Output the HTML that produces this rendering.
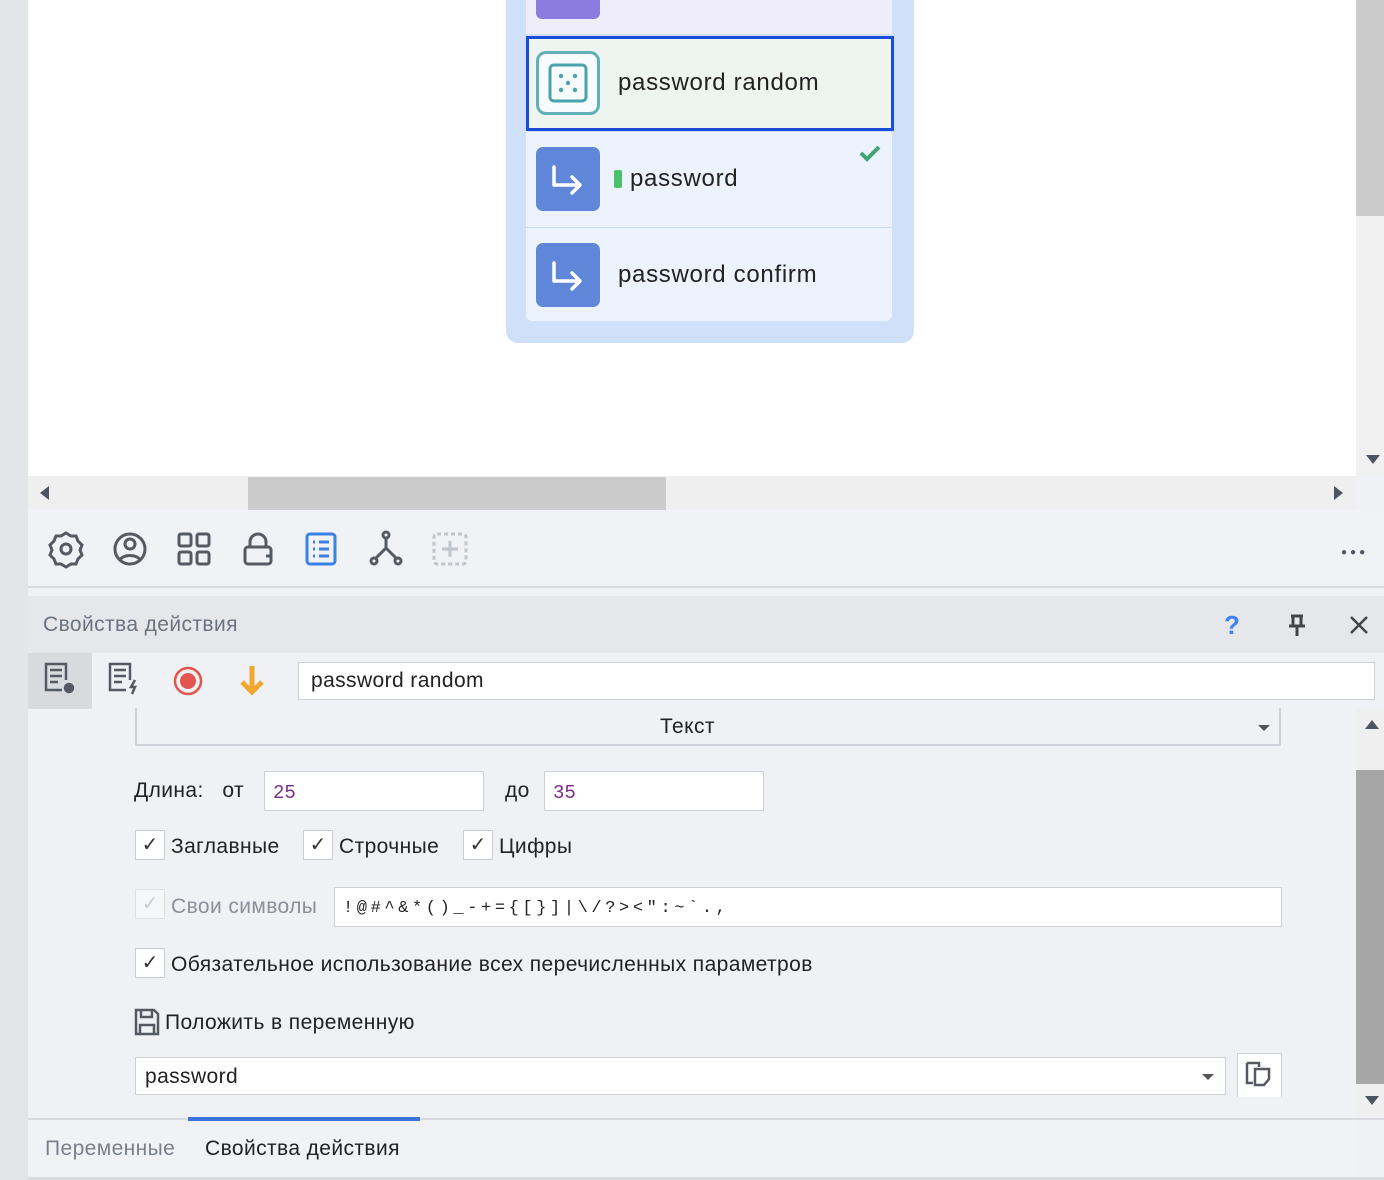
<!DOCTYPE html>
<html><head><meta charset="utf-8"><style>
*{margin:0;padding:0;box-sizing:border-box}
body{width:1384px;height:1180px;position:relative;overflow:hidden;background:#f0f1f5;font-family:"Liberation Sans","DejaVu Sans",sans-serif;color:#222}
.a{position:absolute}
.t{font-size:21px;white-space:nowrap;letter-spacing:0.4px}
.cb{position:absolute;width:30px;height:30px;border:1px solid #c9ccd3;background:#fff;font-size:20px;text-align:center;line-height:28px;color:#333}
.inp{position:absolute;background:#fff;border:1px solid #cdd0d6}
</style></head><body>
<div class="a" style="left:0;top:0;width:28px;height:1180px;background:#e3e5e9"></div>
<div class="a" style="left:28px;top:0;width:1328px;height:476px;background:#fff"></div>
<div class="a" style="left:1356px;top:0;width:28px;height:476px;background:#f0f0f0"></div>
<div class="a" style="left:1356px;top:0;width:28px;height:216px;background:#cbcbcb"></div>
<div class="a" style="left:1366px;top:455px;width:0;height:0;border-left:7px solid transparent;border-right:7px solid transparent;border-top:9px solid #4b5563"></div>
<div class="a" style="left:28px;top:476px;width:1328px;height:34px;background:#efefef"></div>
<div class="a" style="left:248px;top:477px;width:418px;height:33px;background:#cbcbcb"></div>
<div class="a" style="left:40px;top:486px;border-top:7px solid transparent;border-bottom:7px solid transparent;border-right:9px solid #4b5563"></div>
<div class="a" style="left:1334px;top:486px;border-top:7px solid transparent;border-bottom:7px solid transparent;border-left:9px solid #4b5563"></div>
<div class="a" style="left:506px;top:-20px;width:408px;height:363px;background:#cfe0f8;border-radius:12px"></div>
<div class="a" style="left:526px;top:-10px;width:366px;height:44px;background:#efedf9"></div>
<div class="a" style="left:536px;top:-12px;width:64px;height:31px;background:#8c7ce0;border-radius:6px"></div>
<div class="a" style="left:526px;top:36px;width:368px;height:95px;background:#eef5ef;border:3px solid #1a4dd8"></div>
<div class="a" style="left:536px;top:51px;width:64px;height:64px;border:3px solid #5fb0b8;border-radius:10px;background:#f7fbfb"></div>
<svg class="a" style="left:548px;top:63px" width="40" height="40" viewBox="0 0 40 40"><rect x="2" y="2" width="36" height="36" rx="4" fill="none" stroke="#4aa4ae" stroke-width="3"/><g fill="#4aa4ae"><circle cx="13" cy="13" r="2.2"/><circle cx="27" cy="13" r="2.2"/><circle cx="20" cy="20" r="2.2"/><circle cx="13" cy="27" r="2.2"/><circle cx="27" cy="27" r="2.2"/></g></svg>
<div class="a t" style="left:618px;top:69px;font-size:24px;letter-spacing:0.7px;color:#222">password random</div>
<div class="a" style="left:526px;top:132px;width:366px;height:95px;background:#ecf3fd"></div>
<div class="a" style="left:526px;top:228px;width:366px;height:93px;background:#ecf3fd;border-radius:0 0 6px 6px"></div>
<div class="a" style="left:526px;top:227px;width:366px;height:1px;background:#c9dcf5"></div>
<div class="a" style="left:536px;top:147px;width:64px;height:64px;background:#5f86d9;border-radius:7px"></div>
<div class="a" style="left:536px;top:243px;width:64px;height:64px;background:#5f86d9;border-radius:7px"></div>
<svg class="a" style="left:536px;top:147px" width="64" height="64"><path d="M18 20v18h26M36 30l8 8-8 8" fill="none" stroke="#fff" stroke-width="3.5" stroke-linecap="round" stroke-linejoin="round"/></svg>
<svg class="a" style="left:536px;top:243px" width="64" height="64"><path d="M18 20v18h26M36 30l8 8-8 8" fill="none" stroke="#fff" stroke-width="3.5" stroke-linecap="round" stroke-linejoin="round"/></svg>
<div class="a" style="left:614px;top:170px;width:8px;height:18px;background:#4cc06a;border-radius:2px"></div>
<div class="a t" style="left:630px;top:165px;font-size:24px;letter-spacing:0.7px">password</div>
<svg class="a" style="left:859px;top:144px" width="22" height="18"><path d="M2 9l6 6L20 3" fill="none" stroke="#3fa673" stroke-width="4"/></svg>
<div class="a t" style="left:618px;top:261px;font-size:24px;letter-spacing:0.7px">password confirm</div>
<div class="a" style="left:28px;top:510px;width:1356px;height:78px;background:#f1f2f6;border-bottom:2px solid #d8dade"></div>
<svg class="a" style="left:48px;top:530px" width="440" height="40" fill="none" stroke="#555a62" stroke-width="3">
<path d="M18 3l5 3h5l2 5 4 4-2 5 2 5-4 4-2 5h-5l-5 3-5-3h-5l-2-5-4-4 2-5-2-5 4-4 2-5h5z"/><circle cx="18" cy="19" r="5"/>
<circle cx="82" cy="19" r="15"/><circle cx="82" cy="14" r="5"/><path d="M72 30c3-6 17-6 20 0"/>
<rect x="131" y="4" width="12" height="12" rx="2"/><rect x="149" y="4" width="12" height="12" rx="2"/><rect x="131" y="22" width="12" height="12" rx="2"/><rect x="149" y="22" width="12" height="12" rx="2"/>
<path d="M202 17v-5a8 8 0 0 1 16 0v5"/><rect x="197" y="17" width="26" height="17" rx="3"/><path d="M218 26h5"/>
<rect x="259" y="4" width="28" height="30" rx="3" stroke="#3a82e8"/><path d="M265 12h2M271 12h10M265 19h2M271 19h10M265 26h2M271 26h10" stroke="#3a82e8"/>
<circle cx="338" cy="5" r="3"/><circle cx="326" cy="31" r="3"/><circle cx="350" cy="31" r="3"/><path d="M338 8v10M338 18l-11 11M338 18l11 11"/>
<rect x="386" y="4" width="32" height="30" rx="3" stroke="#c0c4cb" stroke-dasharray="4 3"/><path d="M402 11v16M394 19h16" stroke="#c0c4cb"/>
</svg>
<div class="a" style="left:1341px;top:547px;font-size:10px;letter-spacing:3px;color:#4b5563">●●●</div>
<div class="a" style="left:28px;top:596px;width:1356px;height:57px;background:#e6e7eb"></div>
<div class="a t" style="left:43px;top:613px;color:#6b7280">Свойства действия</div>
<div class="a" style="left:1224px;top:610px;font-size:26px;color:#3b82f6;font-weight:bold">?</div>
<svg class="a" style="left:1287px;top:614px" width="20" height="24"><path d="M4 2h12M6 2v10h8V2M2 12h16M10 12v10" fill="none" stroke="#444" stroke-width="3"/></svg>
<svg class="a" style="left:1349px;top:615px" width="20" height="20"><path d="M2 2l16 16M18 2L2 18" stroke="#444" stroke-width="2.5"/></svg>
<div class="a" style="left:28px;top:653px;width:64px;height:56px;background:#d8dade"></div>
<svg class="a" style="left:40px;top:660px" width="260" height="42" fill="none" stroke="#555a62" stroke-width="2.5">
<path d="M22 30H6V4h20v16"/><path d="M10 10h12M10 16h12M10 22h8"/><circle cx="29" cy="28" r="4" fill="#555a62"/>
<path d="M86 30H70V4h20v16"/><path d="M74 10h12M74 16h12M74 22h8"/><path d="M95 20l-4 7h4l-3 7" stroke-width="2.5"/>
<circle cx="148" cy="21" r="13" stroke="#e3564d"/><circle cx="148" cy="21" r="8" fill="#e3564d" stroke="none"/>
<path d="M212 6v26M202 22l10 10 10-10" stroke="#f0a830" stroke-width="5"/>
</svg>
<div class="inp" style="left:298px;top:662px;width:1077px;height:38px"></div>
<div class="a t" style="left:311px;top:669px">password random</div>
<div class="a" style="left:135px;top:708px;width:1146px;height:38px;border-left:2px solid #cdd0d6;border-right:2px solid #cdd0d6;border-bottom:2px solid #cdd0d6"></div>
<div class="a t" style="left:660px;top:715px">Текст</div>
<div class="a" style="left:1258px;top:725px;border-left:6px solid transparent;border-right:6px solid transparent;border-top:6px solid #555"></div>
<div class="a" style="left:1356px;top:708px;width:28px;height:412px;background:#efefef"></div>
<div class="a" style="left:1356px;top:770px;width:28px;height:314px;background:#a6a6a6"></div>
<div class="a" style="left:1365px;top:720px;border-left:7px solid transparent;border-right:7px solid transparent;border-bottom:9px solid #4b5563"></div>
<div class="a" style="left:1365px;top:1096px;border-left:7px solid transparent;border-right:7px solid transparent;border-top:9px solid #4b5563"></div>
<div class="a t" style="left:134px;top:779px">Длина:&nbsp;&nbsp; от</div>
<div class="inp" style="left:264px;top:771px;width:220px;height:40px"></div>
<div class="a" style="left:273px;top:782px;font-family:'Liberation Mono',monospace;font-size:19px;color:#7a2a8a">25</div>
<div class="a t" style="left:505px;top:779px">до</div>
<div class="inp" style="left:544px;top:771px;width:220px;height:40px"></div>
<div class="a" style="left:553px;top:782px;font-family:'Liberation Mono',monospace;font-size:19px;color:#7a2a8a">35</div>
<div class="cb" style="left:135px;top:830px">✓</div><div class="a t" style="left:171px;top:835px">Заглавные</div>
<div class="cb" style="left:303px;top:830px">✓</div><div class="a t" style="left:339px;top:835px">Строчные</div>
<div class="cb" style="left:463px;top:830px">✓</div><div class="a t" style="left:499px;top:835px">Цифры</div>
<div class="cb" style="left:135px;top:889px;color:#ccc;border-color:#dcdfe4;background:#f5f6f8">✓</div><div class="a t" style="left:171px;top:895px;color:#8a8f98">Свои символы</div>
<div class="inp" style="left:334px;top:887px;width:948px;height:40px"></div>
<div class="a" style="left:343px;top:899px;font-family:'Liberation Mono',monospace;font-size:17px;letter-spacing:3.6px;color:#222">!@#^&amp;*()_-+={[}]|\/?&gt;&lt;":~`.,</div>
<div class="cb" style="left:135px;top:948px">✓</div><div class="a t" style="left:171px;top:953px">Обязательное использование всех перечисленных параметров</div>
<svg class="a" style="left:134px;top:1008px" width="26" height="28" fill="none" stroke="#555a62" stroke-width="2.5"><path d="M2 2h18l4 4v20H2z"/><path d="M7 2v7h11V2M6 26v-9h14v9"/></svg>
<div class="a t" style="left:165px;top:1011px">Положить в переменную</div>
<div class="inp" style="left:135px;top:1057px;width:1091px;height:38px"></div>
<div class="a t" style="left:145px;top:1065px">password</div>
<div class="a" style="left:1202px;top:1074px;border-left:6px solid transparent;border-right:6px solid transparent;border-top:6px solid #555"></div>
<div class="inp" style="left:1237px;top:1053px;width:45px;height:44px;border-bottom:none"></div>
<svg class="a" style="left:1245px;top:1060px" width="30" height="30" fill="none" stroke="#555a62" stroke-width="2.5"><path d="M2 3h12v4M2 3v20h6"/><path d="M10 9h14v10l-5 6h-9z"/></svg>
<div class="a" style="left:28px;top:1118px;width:1356px;height:2px;background:#d8dade"></div>
<div class="a" style="left:28px;top:1120px;width:1328px;height:58px;background:#f1f2f6"></div>
<div class="a" style="left:188px;top:1117px;width:232px;height:4px;background:#3b72db"></div>
<div class="a t" style="left:45px;top:1137px;color:#7a818c">Переменные</div>
<div class="a t" style="left:205px;top:1137px">Свойства действия</div>
<div class="a" style="left:28px;top:1177px;width:1356px;height:3px;background:#d8dade"></div>
</body></html>
